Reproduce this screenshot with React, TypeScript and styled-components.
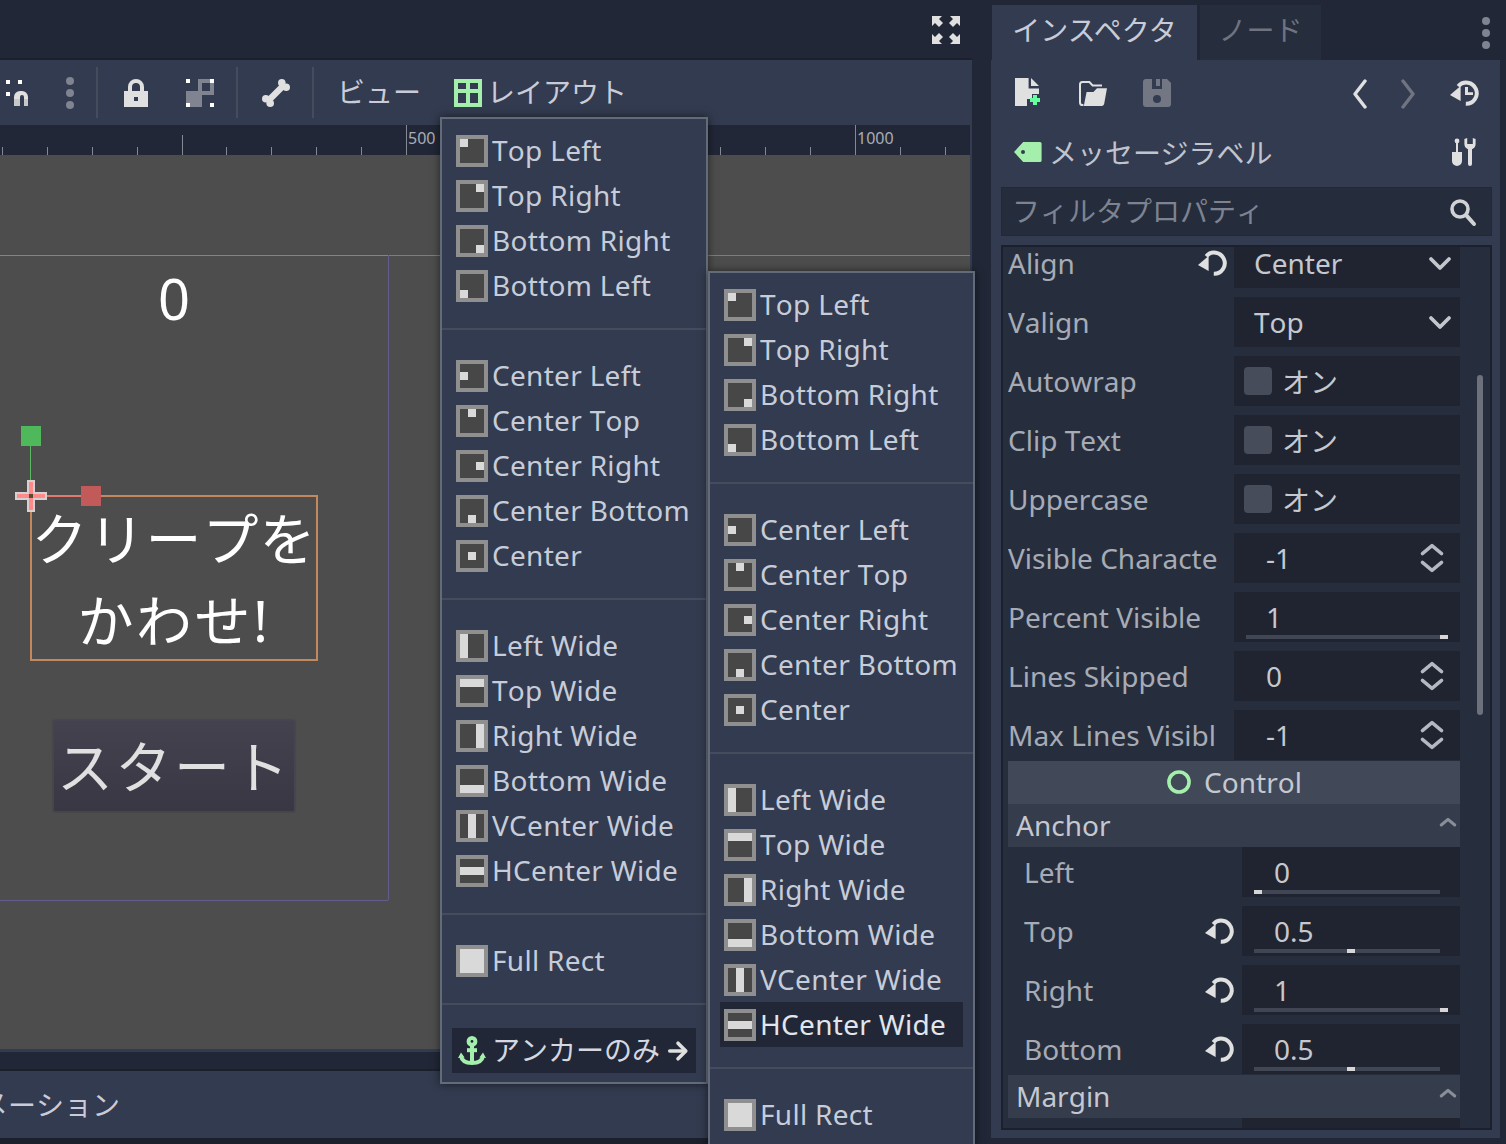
import React from "react";
import styled, { createGlobalStyle } from "styled-components";

const PANEL = "#323b4f";
const DARK = "#212736";
const FIELD = "#1f2430";
const ICON = "#e0e0e0";
const GREEN = "#a5efac";

const GlobalStyle = createGlobalStyle`
  html, body {
    margin: 0;
    padding: 0;
    background: ${DARK};
  }
  body {
    font-family: "Noto Sans", "Noto Sans CJK JP", sans-serif;
    font-size: 28px;
    font-kerning: none;
  }
`;

const Page = styled.div`
  position: relative;
  display: flex;
  width: 1506px;
  height: 1144px;
  overflow: hidden;
  background: ${DARK};
`;

/* ---------- left column ---------- */

const MainColumn = styled.div`
  display: flex;
  flex-direction: column;
  width: 972px;
  flex: none;
`;

const TopStrip = styled.div`
  display: flex;
  align-items: center;
  justify-content: flex-end;
  box-sizing: border-box;
  height: 58px;
  padding: 2px 10px 0 0;
`;

const Toolbar = styled.div`
  display: flex;
  align-items: center;
  height: 65px;
  border-top: 2px solid #1b202c;
  background: ${PANEL};
  color: #c9ccd8;
  white-space: nowrap;
`;

const Tool = styled.div<{ $ml: number }>`
  display: flex;
  flex: none;
  margin-left: ${(p) => p.$ml}px;
`;

const ToolText = styled(Tool)`
  padding-bottom: 4px;
`;

const ToolSep = styled.div<{ $ml: number }>`
  flex: none;
  width: 2px;
  height: 51px;
  margin-left: ${(p) => p.$ml}px;
  background: #454c5e;
`;

const EditorArea = styled.div`
  display: flex;
  flex-direction: column;
  padding-right: 2px;
  background: ${PANEL};
`;

const Ruler = styled.div`
  position: relative;
  height: 30px;
  background: ${DARK};
`;

const RulerLabel = styled.span<{ $x: number }>`
  position: absolute;
  left: ${(p) => p.$x}px;
  top: 1px;
  font-size: 16px;
  line-height: 24px;
  color: #a9adb6;
`;

const Canvas = styled.div`
  position: relative;
  height: 894px;
  background: #4d4d4d;
  overflow: hidden;
`;

const Guide = styled.div<{ $x: number; $y: number; $w: number; $h: number; $c: string }>`
  position: absolute;
  left: ${(p) => p.$x}px;
  top: ${(p) => p.$y}px;
  width: ${(p) => p.$w}px;
  height: ${(p) => p.$h}px;
  background: ${(p) => p.$c};
`;

const ScoreLabel = styled.div`
  position: absolute;
  left: 30px;
  top: 100px;
  width: 288px;
  font-size: 56px;
  line-height: 86px;
  text-align: center;
  color: #fff;
`;

const MessageLabel = styled.div`
  position: absolute;
  left: 30px;
  top: 340px;
  display: flex;
  flex-direction: column;
  align-items: center;
  box-sizing: border-box;
  width: 288px;
  height: 166px;
  border: 2px solid #c4885f;
  font-size: 56px;
  line-height: 82px;
  white-space: nowrap;
  color: #fff;
`;

const MessageLine = styled.span<{ $spacing: number }>`
  letter-spacing: ${(p) => p.$spacing}px;
`;

const StartButton = styled.div`
  position: absolute;
  left: 53px;
  top: 565px;
  box-sizing: border-box;
  width: 242px;
  height: 92px;
  display: flex;
  align-items: center;
  justify-content: center;
  padding-bottom: 6px;
  border: 1px solid #454550;
  border-radius: 2px;
  background: linear-gradient(#44424e, #393743);
  box-shadow: 0 0 2px rgba(0, 0, 0, 0.25);
  font-size: 56px;
  letter-spacing: 2.5px;
  white-space: nowrap;
  color: #e0e0e0;
`;

const Handle = styled.div<{ $x: number; $y: number; $c: string }>`
  position: absolute;
  left: ${(p) => p.$x}px;
  top: ${(p) => p.$y}px;
  width: 20px;
  height: 20px;
  background: ${(p) => p.$c};
`;

const OriginCross = styled.svg`
  position: absolute;
  left: 15px;
  top: 325px;
`;

const StripPanel = styled.div`
  height: 3px;
  background: ${PANEL};
`;

const StripDark = styled.div`
  height: 17px;
  background: ${DARK};
  border-bottom: 2px solid #1b202c;
`;

const BottomPanel = styled.div`
  display: flex;
  align-items: center;
  box-sizing: border-box;
  height: 67px;
  padding-bottom: 2px;
  background: ${PANEL};
  color: #c9ccd8;
  white-space: nowrap;
`;

const BottomTab = styled.span`
  margin-left: -76px;
`;

const BottomEdge = styled.div`
  flex: 1;
  background: #1b202c;
`;

/* ---------- popups ---------- */

const Menu = styled.div<{ $x: number; $y: number; $w: number }>`
  position: absolute;
  left: ${(p) => p.$x}px;
  top: ${(p) => p.$y}px;
  box-sizing: border-box;
  width: ${(p) => p.$w}px;
  padding: 9px 10px;
  background: ${PANEL};
  border: 2px solid #646b78;
  box-shadow: 0 0 8px rgba(0, 0, 0, 0.55);
  color: #c7ccd9;
  white-space: nowrap;
`;

const MenuItem = styled.div<{ $active?: boolean }>`
  display: flex;
  align-items: center;
  gap: 4px;
  height: 45px;
  padding-left: 4px;
  background: ${(p) => (p.$active ? DARK : "transparent")};
  color: ${(p) => (p.$active ? "#e2e5ec" : "inherit")};
  letter-spacing: 0.3px;
  line-height: 45px;
`;

const MenuSep = styled.div`
  display: flex;
  align-items: center;
  box-sizing: border-box;
  height: 45px;
  margin: 0 -10px;
  padding-bottom: 4px;

  &::before {
    content: "";
    flex: 1;
    height: 2px;
    background: #454c5e;
  }
`;

const AnchorLabel = styled.span`
  color: #d5d8e0;
  letter-spacing: 0;
  margin-right: 2px;
`;

/* ---------- dock ---------- */

const Dock = styled.div`
  display: flex;
  flex-direction: column;
  width: 509px;
  margin-left: 19px;
  flex: none;
`;

const TabBar = styled.div`
  display: flex;
  height: 55px;
  padding-top: 5px;
  gap: 3px;
`;

const Tab = styled.div<{ $active?: boolean }>`
  display: flex;
  align-items: center;
  justify-content: center;
  width: ${(p) => (p.$active ? 205 : 121)}px;
  margin-left: ${(p) => (p.$active ? 1 : 0)}px;
  background: ${(p) => (p.$active ? PANEL : "#262d3d")};
  color: ${(p) => (p.$active ? "#c9ccd8" : "#6f7480")};
  font-kerning: normal;
  padding-bottom: 8px;
  box-sizing: border-box;
`;

const TabMenu = styled.div`
  display: flex;
  margin-left: auto;
  margin-right: -2px;
  align-items: center;
`;

const DockPanel = styled.div`
  display: flex;
  flex-direction: column;
  height: 1078px;
  box-sizing: border-box;
  padding: 0 8px 8px 10px;
  background: ${PANEL};
`;

const DockTools = styled.div`
  display: flex;
  align-items: center;
  justify-content: space-between;
  height: 66px;
  padding: 0 11px 0 12px;
`;

const IconGroup = styled.div<{ $gap: number }>`
  display: flex;
  align-items: center;
  gap: ${(p) => p.$gap}px;
`;

const NodeRow = styled.div`
  display: flex;
  align-items: center;
  height: 52px;
  padding: 0 12px 0 11px;
  gap: 5px;
  color: #c0c4d0;
  font-kerning: normal;
`;

const NodeName = styled.span`
  flex: 1;
`;

const FilterBox = styled.div`
  display: flex;
  align-items: center;
  box-sizing: border-box;
  height: 49px;
  margin-top: 9px;
  padding: 0 13px 0 10px;
  background: #252c3b;
  border: 1px solid #20253280;
  color: #7d8391;
`;

const FilterText = styled.span`
  flex: 1;
  margin-bottom: 4px;
`;

const InspectorFrame = styled.div`
  display: flex;
  height: 885px;
  box-sizing: border-box;
  margin-top: 9px;
  padding-left: 5px;
  background: #262e3e;
  border: 2px solid #1b202c;
  overflow: hidden;
`;

const PropList = styled.div`
  display: flex;
  flex-direction: column;
  width: 452px;
  flex: none;
  margin-top: -9px;
`;

const ScrollThumb = styled.div`
  flex: none;
  width: 6px;
  height: 340px;
  margin: 128px 0 0 17px;
  border-radius: 3px;
  background: #6d717c;
`;

const PropRow = styled.div`
  display: flex;
  flex: none;
  height: 50px;
  margin-bottom: 9px;
`;

const PropLabel = styled.div<{ $sub?: boolean }>`
  display: flex;
  align-items: center;
  box-sizing: border-box;
  flex: none;
  width: ${(p) => (p.$sub ? 234 : 226)}px;
  padding: 0 ${(p) => (p.$sub ? 6 : 5)}px 0 ${(p) => (p.$sub ? 16 : 0)}px;
  color: #a7abb5;
  white-space: nowrap;
`;

const LabelText = styled.span`
  flex: 1;
  overflow: hidden;
`;

const Field = styled.div<{ $left?: number; $right?: number }>`
  position: relative;
  display: flex;
  align-items: center;
  flex: 1;
  padding: 0 ${(p) => p.$right ?? 12}px 0 ${(p) => p.$left ?? 32}px;
  background: ${FIELD};
  color: #c5c8ce;
`;

const FieldText = styled.span`
  flex: 1;
`;

const CheckBox = styled.div`
  flex: none;
  width: 28px;
  height: 28px;
  margin-right: 10px;
  border-radius: 4px;
  background: #464c5a;
`;

const Track = styled.div`
  position: absolute;
  left: 12px;
  right: 20px;
  bottom: 3px;
  height: 4px;
  background: #414654;
`;

const Grabber = styled.div`
  position: absolute;
  top: 0;
  width: 8px;
  height: 4px;
  background: #d6d6d6;
`;

const Section = styled.div<{ $main?: boolean; $first?: boolean }>`
  display: flex;
  align-items: center;
  justify-content: ${(p) => (p.$main ? "center" : "space-between")};
  flex: none;
  box-sizing: border-box;
  gap: 12px;
  height: 43px;
  margin-top: ${(p) => (p.$first ? -8 : 0)}px;
  padding: 0 0 2px ${(p) => (p.$main ? 0 : 8)}px;
  background: ${(p) => (p.$main ? "#414857" : "#353c4b")};
  color: #c5c8d0;
`;

/* ---------- icons ---------- */

const Svg = styled.svg`
  display: block;
  flex: none;
`;

type IconProps = { size?: number; children: React.ReactNode };

function Icon({ size = 32, children }: IconProps) {
  return (
    <Svg width={size} height={size} viewBox="0 0 16 16">
      {children}
    </Svg>
  );
}

const MagnetIcon = () => (
  <Icon>
    <path fill="#fff" d="M3 1.5h2v2H3zM9 1.5h2v2H9zM3 7.5h2v2H3z" />
    <path fill={ICON} d="M7 10a3 3 0 0 1 3-3h1a3 3 0 0 1 3 3v1h-2v-1a1 1 0 0 0-2 0v1H7z" />
    <path fill="#c8c8c8" d="M7 11h3v3.5H7zM12 11h2v3.5h-2z" />
  </Icon>
);

const DotsIcon = () => (
  <Icon>
    <circle cx="8" cy="2" r="2" fill="#7f8490" />
    <circle cx="8" cy="8" r="2" fill="#7f8490" />
    <circle cx="8" cy="14" r="2" fill="#7f8490" />
  </Icon>
);

const LockIcon = () => (
  <Icon>
    <path
      fill={ICON}
      fillRule="evenodd"
      d="M8 1a4 4 0 0 0-4 4v2H2v8h12V7h-2V5a4 4 0 0 0-4-4zm0 2a2 2 0 0 1 2 2v2H6V5a2 2 0 0 1 2-2zM7 10h2v2H7z"
    />
  </Icon>
);

const GroupIcon = () => (
  <Icon>
    <path fill="#7f8490" fillRule="evenodd" d="M7 1h8v8H9V7H7zM9 3v4h4V3z" />
    <path fill="#7f8490" d="M1 7h8v8H1z" />
    <path fill="#fff" d="M1 1h2v2H1zM13 1h2v2h-2zM1 13h2v2H1zM13 13h2v2h-2z" />
  </Icon>
);

const BoneIcon = () => (
  <Icon>
    <path stroke={ICON} strokeWidth="3.2" d="M4 12 12 4" />
    <g fill={ICON}>
      <circle cx="2.9" cy="10.9" r="1.9" />
      <circle cx="5.1" cy="13.1" r="1.9" />
      <circle cx="10.9" cy="2.9" r="1.9" />
      <circle cx="13.1" cy="5.1" r="1.9" />
    </g>
  </Icon>
);

const LayoutIcon = () => (
  <Icon>
    <path fill={GREEN} fillRule="evenodd" d="M1 1h14v14H1zM3 3v3h4V3zM9 3v3h4V3zM3 8v5h4V8zM9 8v5h4V8z" />
  </Icon>
);

const FullscreenIcon = () => {
  const corner = "M1 1h5L4.500 2.500 6.500 4.500 4.500 6.500 2.500 4.500 1 6z";
  return (
    <Icon>
      <g fill={ICON}>
        <path d={corner} />
        <path d={corner} transform="matrix(-1 0 0 1 16 0)" />
        <path d={corner} transform="matrix(1 0 0 -1 0 16)" />
        <path d={corner} transform="matrix(-1 0 0 -1 16 16)" />
      </g>
    </Icon>
  );
};

const NewFileIcon = () => (
  <Icon>
    <path fill={ICON} d="M1 .5h6.800v5.300H13v2.700H9.500V11H7v3.500H1zM9 .5l4 4H9z" />
    <path fill="#66ffa0" d="M10 9h2v1.500h1.500v2H12V14h-2v-1.500H8.500v-2H10z" />
  </Icon>
);

const FolderIcon = () => (
  <Icon>
    <path
      fill="none"
      stroke={ICON}
      strokeWidth="1"
      d="M3.200 14H2.800C2 14 1.500 13.500 1.500 12.700V3.800C1.500 3 2 2.500 2.700 2.500H6.200L7.800 4.200H12.500"
    />
    <path fill={ICON} d="M4.800 7.500H8.200L10 5.600H15L13.600 13.400C13.500 14 13 14.500 12.400 14.500H3.400z" />
  </Icon>
);

const SaveIcon = () => (
  <Icon>
    <path
      fill="#737783"
      fillRule="evenodd"
      d="M2.500 1H5.500V6H10.500V1H13L15 3V13.500A1.500 1.500 0 0 1 13.500 15H2.500A1.500 1.500 0 0 1 1 13.500V2.500A1.500 1.500 0 0 1 2.500 1zM8 9a2 2 0 1 0 0 4 2 2 0 0 0 0-4z"
    />
    <path fill="#737783" d="M7.500 1H9.500V4.500H7.500z" />
  </Icon>
);

const Chevron = ({ points, color }: { points: string; color: string }) => (
  <Icon>
    <polyline
      points={points}
      fill="none"
      stroke={color}
      strokeWidth="1.700"
      strokeLinecap="round"
      strokeLinejoin="round"
    />
  </Icon>
);

const ResetIcon = ({ clock }: { clock?: boolean }) => (
  <Icon>
    <path fill="none" stroke={ICON} strokeWidth="2" d="M4.600 4.600A5.300 5.300 0 1 1 8.400 13.400" />
    <path fill={ICON} d="M.5 9 5.800 4.500V12z" />
    {clock && <path fill={ICON} d="M8 5h1.500v2.600H12V9H8z" />}
  </Icon>
);

const TagIcon = () => (
  <Icon>
    <path
      fill={GREEN}
      fillRule="evenodd"
      d="M1 8 5.600 3H14a.8.8 0 0 1 .8.8v8.400a.8.8 0 0 1-.8.8H5.600zM5.500 7a1 1 0 1 0 0 2 1 1 0 0 0 0-2z"
    />
  </Icon>
);

const ToolsIcon = () => (
  <Icon>
    <g fill={ICON}>
      <circle cx="4.500" cy="2.500" r="1.200" />
      <path d="M4 3h1v5H4z" />
      <path d="M2 8h5v4.500a2.500 2.500 0 0 1-5 0z" />
      <path d="M8.200 1.500V4A2.800 2.800 0 0 0 10 6.600V14a1 1 0 0 0 2 0V6.600A2.800 2.800 0 0 0 13.800 4V1.500L12.400 1V4H9.600V1z" />
    </g>
  </Icon>
);

const SearchIcon = () => (
  <Icon>
    <circle cx="7" cy="6.500" r="4" fill="none" stroke="#d0d2d6" strokeWidth="1.800" />
    <path stroke="#d0d2d6" strokeWidth="2" strokeLinecap="round" d="M10.300 9.800 14 14" />
  </Icon>
);

const SelectArrow = () => (
  <Icon>
    <polyline
      points="3.500,6 8,10.500 12.500,6"
      fill="none"
      stroke="#c4c6cc"
      strokeWidth="1.900"
      strokeLinecap="round"
      strokeLinejoin="round"
    />
  </Icon>
);

const SpinArrows = () => (
  <Icon>
    <g fill="none" stroke="#b5b8c0" strokeWidth="1.700" strokeLinecap="round" strokeLinejoin="round">
      <polyline points="3.200,5.800 8,1.800 12.800,5.800" />
      <polyline points="3.200,10.200 8,14.200 12.800,10.200" />
    </g>
  </Icon>
);

const CollapseArrow = () => (
  <Icon size={24}>
    <polyline
      points="3.500,8 8,4.200 12.500,8"
      fill="none"
      stroke="#8a8e99"
      strokeWidth="2"
      strokeLinecap="round"
      strokeLinejoin="round"
    />
  </Icon>
);

const ControlIcon = () => (
  <Icon size={26}>
    <circle cx="8" cy="8" r="6.200" fill="none" stroke={GREEN} strokeWidth="2.200" />
  </Icon>
);

const AnchorIcon = () => (
  <Icon>
    <g fill="none" stroke={GREEN} strokeWidth="2">
      <circle cx="8" cy="3.200" r="1.700" />
      <path d="M8 5v9" />
      <path d="M5.500 7.600h5" />
      <path d="M2.500 10.500C2.900 13 5 14 8 14s5.100-1 5.500-3.500" />
    </g>
    <path fill={GREEN} d="M1 11.500 2.500 8.800l1.800 2.500zM15 11.500 13.500 8.800l-1.800 2.500z" />
  </Icon>
);

const ArrowIcon = () => (
  <Icon size={24}>
    <g fill="none" stroke={ICON} strokeWidth="2.400" strokeLinecap="round" strokeLinejoin="round">
      <path d="M2.500 8h10" />
      <polyline points="8,2.800 13.200,8 8,13.200" />
    </g>
  </Icon>
);

type Rect = [number, number, number, number];

const PresetIcon = ({ rect }: { rect: Rect }) => (
  <Svg width="32" height="32" viewBox="0 0 32 32">
    <rect width="32" height="32" fill="#8f8f8f" />
    <rect x="4" y="4" width="24" height="24" fill="#474747" />
    <rect x={rect[0]} y={rect[1]} width={rect[2]} height={rect[3]} fill="#d9d9d9" />
  </Svg>
);

/* ---------- data ---------- */

const presetGroups: [string, Rect][][] = [
  [
    ["Top Left", [4, 4, 8, 8]],
    ["Top Right", [20, 4, 8, 8]],
    ["Bottom Right", [20, 20, 8, 8]],
    ["Bottom Left", [4, 20, 8, 8]],
  ],
  [
    ["Center Left", [4, 12, 8, 8]],
    ["Center Top", [12, 4, 8, 8]],
    ["Center Right", [20, 12, 8, 8]],
    ["Center Bottom", [12, 20, 8, 8]],
    ["Center", [12, 12, 8, 8]],
  ],
  [
    ["Left Wide", [4, 4, 8, 24]],
    ["Top Wide", [4, 4, 24, 8]],
    ["Right Wide", [20, 4, 8, 24]],
    ["Bottom Wide", [4, 20, 24, 8]],
    ["VCenter Wide", [12, 4, 8, 24]],
    ["HCenter Wide", [4, 12, 24, 8]],
  ],
  [["Full Rect", [4, 4, 24, 24]]],
];

function PresetItems({ active }: { active?: string }) {
  return (
    <>
      {presetGroups.map((group, i) => (
        <React.Fragment key={i}>
          {i > 0 && <MenuSep />}
          {group.map(([name, rect]) => (
            <MenuItem key={name} $active={name === active}>
              <PresetIcon rect={rect} />
              {name}
            </MenuItem>
          ))}
        </React.Fragment>
      ))}
    </>
  );
}

type RulerTick = { x: number; y: number };

const rulerTicks: RulerTick[] = Array.from({ length: 22 }, (_, n) => {
  const i = n - 9;
  const major = i % 10 === 0;
  const medium = i % 5 === 0;
  return { x: Math.round(406 + i * 44.9) + 0.5, y: major ? 0 : medium ? 10 : 22 };
});

function Slider({ value }: { value: number }) {
  return (
    <Track>
      <Grabber style={{ left: `${value * 100}%` }} />
    </Track>
  );
}

function CheckRow({ label }: { label: string }) {
  return (
    <PropRow>
      <PropLabel>
        <LabelText>{label}</LabelText>
      </PropLabel>
      <Field $left={10} $right={0}>
        <CheckBox />
        <FieldText>オン</FieldText>
      </Field>
    </PropRow>
  );
}

function SpinRow({ label, value }: { label: string; value: string }) {
  return (
    <PropRow>
      <PropLabel>
        <LabelText>{label}</LabelText>
      </PropLabel>
      <Field>
        <FieldText>{value}</FieldText>
        <SpinArrows />
      </Field>
    </PropRow>
  );
}

function SelectRow({ label, value, reset }: { label: string; value: string; reset?: boolean }) {
  return (
    <PropRow>
      <PropLabel>
        <LabelText>{label}</LabelText>
        {reset && <ResetIcon />}
      </PropLabel>
      <Field $left={20} $right={4}>
        <FieldText>{value}</FieldText>
        <SelectArrow />
      </Field>
    </PropRow>
  );
}

function AnchorRow({ label, value, ratio, reset }: { label: string; value: string; ratio: number; reset?: boolean }) {
  return (
    <PropRow>
      <PropLabel $sub>
        <LabelText>{label}</LabelText>
        {reset && <ResetIcon />}
      </PropLabel>
      <Field>
        <FieldText>{value}</FieldText>
        <Slider value={ratio} />
      </Field>
    </PropRow>
  );
}

export default function App() {
  return (
    <Page>
      <GlobalStyle />
      <MainColumn>
        <TopStrip>
          <FullscreenIcon />
        </TopStrip>
        <Toolbar>
          <Tool $ml={0}>
            <MagnetIcon />
          </Tool>
          <Tool $ml={22}>
            <DotsIcon />
          </Tool>
          <ToolSep $ml={10} />
          <Tool $ml={22}>
            <LockIcon />
          </Tool>
          <Tool $ml={32}>
            <GroupIcon />
          </Tool>
          <ToolSep $ml={20} />
          <Tool $ml={22}>
            <BoneIcon />
          </Tool>
          <ToolSep $ml={20} />
          <ToolText $ml={23}>ビュー</ToolText>
          <Tool $ml={31}>
            <LayoutIcon />
          </Tool>
          <ToolText $ml={3}>レイアウト</ToolText>
        </Toolbar>
        <EditorArea>
          <Ruler>
            <Svg width="970" height="30">
              {rulerTicks.map((t) => (
                <line key={t.x} x1={t.x} x2={t.x} y1={t.y} y2={30} stroke="#858993" />
              ))}
            </Svg>
            <RulerLabel $x={408}>500</RulerLabel>
            <RulerLabel $x={857}>1000</RulerLabel>
          </Ruler>
          <Canvas>
            <Guide $x={0} $y={100} $w={388} $h={1} $c="#a06ea8" />
            <Guide $x={388} $y={100} $w={582} $h={1} $c="#c8604e" />
            <Guide $x={388} $y={100} $w={1} $h={645} $c="#625c90" />
            <Guide $x={0} $y={745} $w={388} $h={1} $c="#625c90" />
            <ScoreLabel>0</ScoreLabel>
            <MessageLabel>
              <MessageLine $spacing={1}>クリープを</MessageLine>
              <MessageLine $spacing={2.5}>かわせ!</MessageLine>
            </MessageLabel>
            <StartButton>スタート</StartButton>
            <Guide $x={30} $y={291} $w={1} $h={34} $c="#5cb860" />
            <Guide $x={47} $y={340} $w={34} $h={2} $c="#e07a70" />
            <Handle $x={21} $y={271} $c="#4fb85b" />
            <Handle $x={81} $y={331} $c="#c25a5a" />
            <OriginCross width="32" height="32" viewBox="0 0 32 32">
              <path fill="#d8d0d0" d="M12 0h8v12h12v8H20v12h-8V20H0v-8h12z" />
              <path fill="#ff8a8a" d="M14 2h4v12h12v4H18v12h-4V18H2v-4h12z" />
              <rect x="14" y="14" width="4" height="4" fill="#5a4a3a" />
            </OriginCross>
          </Canvas>
          <StripPanel />
        </EditorArea>
        <StripDark />
        <BottomPanel>
          <BottomTab>アニメーション</BottomTab>
        </BottomPanel>
        <BottomEdge />
      </MainColumn>

      <Dock>
        <TabBar>
          <Tab $active>インスペクタ</Tab>
          <Tab>ノード</Tab>
          <TabMenu>
            <DotsIcon />
          </TabMenu>
        </TabBar>
        <DockPanel>
          <DockTools>
            <IconGroup $gap={32}>
              <NewFileIcon />
              <FolderIcon />
              <SaveIcon />
            </IconGroup>
            <IconGroup $gap={25}>
              <IconGroup $gap={16}>
                <Chevron points="10.500,2 5.500,8.500 10.500,15" color={ICON} />
                <Chevron points="5.500,2 10.500,8.500 5.500,15" color="#6f7480" />
              </IconGroup>
              <ResetIcon clock />
            </IconGroup>
          </DockTools>
          <NodeRow>
            <TagIcon />
            <NodeName>メッセージラベル</NodeName>
            <ToolsIcon />
          </NodeRow>
          <FilterBox>
            <FilterText>フィルタプロパティ</FilterText>
            <SearchIcon />
          </FilterBox>
          <InspectorFrame>
            <PropList>
              <SelectRow label="Align" value="Center" reset />
              <SelectRow label="Valign" value="Top" />
              <CheckRow label="Autowrap" />
              <CheckRow label="Clip Text" />
              <CheckRow label="Uppercase" />
              <SpinRow label="Visible Characte" value="-1" />
              <PropRow>
                <PropLabel>
                  <LabelText>Percent Visible</LabelText>
                </PropLabel>
                <Field>
                  <FieldText>1</FieldText>
                  <Slider value={1} />
                </Field>
              </PropRow>
              <SpinRow label="Lines Skipped" value="0" />
              <SpinRow label="Max Lines Visibl" value="-1" />
              <Section $main $first>
                <ControlIcon />
                Control
              </Section>
              <Section>
                Anchor
                <CollapseArrow />
              </Section>
              <AnchorRow label="Left" value="0" ratio={0} />
              <AnchorRow label="Top" value="0.5" ratio={0.5} reset />
              <AnchorRow label="Right" value="1" ratio={1} reset />
              <AnchorRow label="Bottom" value="0.5" ratio={0.5} reset />
              <Section $first>
                Margin
                <CollapseArrow />
              </Section>
              <PropRow>
                <PropLabel $sub />
                <Field />
              </PropRow>
            </PropList>
            <ScrollThumb />
          </InspectorFrame>
        </DockPanel>
      </Dock>

      <Menu $x={440} $y={117} $w={268}>
        <PresetItems />
        <MenuSep />
        <MenuItem $active>
          <AnchorIcon />
          <AnchorLabel>アンカーのみ</AnchorLabel>
          <ArrowIcon />
        </MenuItem>
      </Menu>
      <Menu $x={708} $y={271} $w={267}>
        <PresetItems active="HCenter Wide" />
      </Menu>
    </Page>
  );
}
